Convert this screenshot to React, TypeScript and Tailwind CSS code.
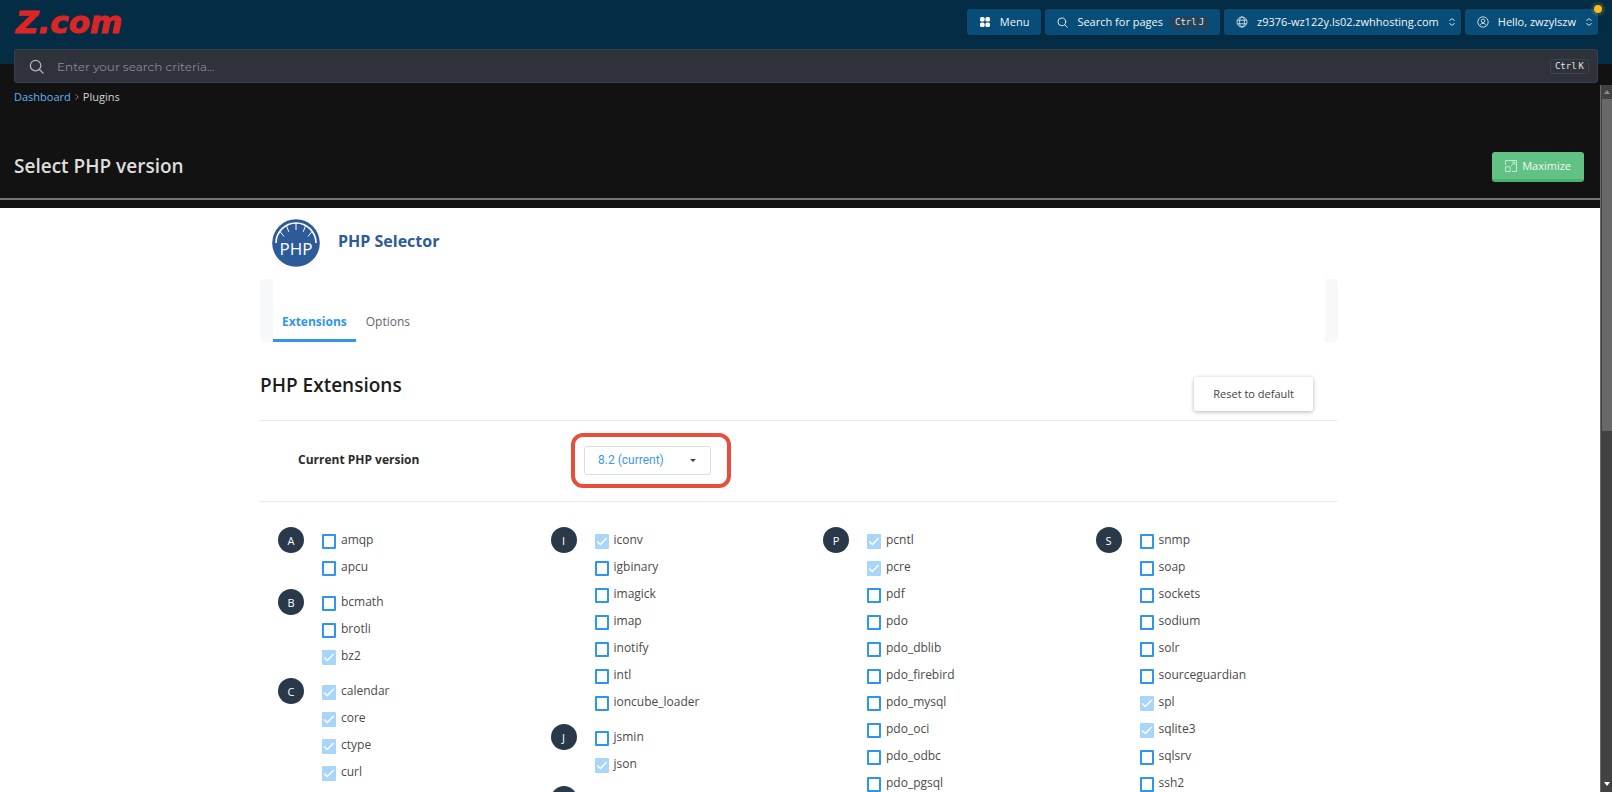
import React, { useState } from 'react';

const columns = [
  [
    { letter: 'A', items: ['amqp', 'apcu'] },
    { letter: 'B', items: ['bcmath', 'brotli', 'bz2'] },
    { letter: 'C', items: ['calendar', 'core', 'ctype', 'curl'] },
  ],
  [
    { letter: 'I', items: ['iconv', 'igbinary', 'imagick', 'imap', 'inotify', 'intl', 'ioncube_loader'] },
    { letter: 'J', items: ['jsmin', 'json'] },
    { letter: '', items: [] },
  ],
  [
    {
      letter: 'P',
      items: ['pcntl', 'pcre', 'pdf', 'pdo', 'pdo_dblib', 'pdo_firebird', 'pdo_mysql', 'pdo_oci', 'pdo_odbc', 'pdo_pgsql'],
    },
  ],
  [
    {
      letter: 'S',
      items: ['snmp', 'soap', 'sockets', 'sodium', 'solr', 'sourceguardian', 'spl', 'sqlite3', 'sqlsrv', 'ssh2'],
    },
  ],
];

// built into PHP, always on
const builtIn = ['bz2', 'calendar', 'core', 'ctype', 'curl', 'iconv', 'json', 'pcntl', 'pcre', 'spl', 'sqlite3'];

const navButton =
  'flex h-[26px] items-center rounded-[3px] bg-[#084d78] text-[11px] text-[#f1f6f9] shadow-sm';

function SearchIcon({ className }) {
  return (
    <svg className={className} viewBox="0 0 16 16" fill="none" stroke="currentColor" strokeWidth="1.3" strokeLinecap="round">
      <circle cx="7" cy="7" r="5.6" />
      <path d="M11.2 11.2 15 15" />
    </svg>
  );
}

function UpDownIcon() {
  return (
    <svg className="h-[8px] w-[6px]" viewBox="0 0 6 8" fill="none" stroke="#c5d6e1" strokeWidth="1">
      <path d="M.8 2.9V2.2L3 .7l2.2 1.5v.7M.8 5.1v.7L3 7.3l2.2-1.5v-.7" />
    </svg>
  );
}

function PhpLogo() {
  return (
    <svg className="h-12 w-12" viewBox="0 0 48 48" role="img" aria-label="PHP">
      <circle cx="24" cy="24" r="23.8" fill="#2d5a99" />
      <g fill="none" stroke="#fff">
        <path d="M4 24a20 20 0 0 1 40 0" strokeWidth="1.6" />
        <path d="M24 4v7M14.5 6.8l2.3 6M33.5 6.8l-2.3 6M8 12.5l4 5M40 12.5l-4 5" strokeWidth="1" />
      </g>
      <text x="24" y="36" textAnchor="middle" fill="#fff" fontFamily="'Open Sans', sans-serif" fontSize="17" fontWeight="500">
        PHP
      </text>
    </svg>
  );
}

function Extension({ name }) {
  const locked = builtIn.includes(name);
  return (
    <label className="flex h-[27px] items-start gap-[5px] text-[12px] leading-[26px] text-[#4a4a4a]">
      <span className="relative mt-[7px] h-[15px] w-[14px] shrink-0">
        <input
          type="checkbox"
          defaultChecked={locked}
          disabled={locked}
          className="block h-[15px] w-[14px] appearance-none rounded-[1px] border-2 border-[#2f96ee] checked:border-[#a8d6fa] checked:bg-[#a8d6fa]"
        />
        {locked && (
          <svg className="pointer-events-none absolute inset-0" viewBox="0 0 14 15" fill="none" stroke="#fff" strokeWidth="1.4">
            <path d="m2.2 7.4 3.1 3.2 6.4-6.6" />
          </svg>
        )}
      </span>
      {name}
    </label>
  );
}

export default function App() {
  const [version, setVersion] = useState('8.2');

  return (
    <div className="flex h-screen flex-col overflow-hidden bg-[#121212] font-['Open_Sans',sans-serif]">
      <header className="flex h-16 shrink-0 items-start justify-between bg-[#042c44] px-[14px]">
        <a
          href="#"
          className="pt-[6px] pl-[2px] font-['DejaVu_Sans',sans-serif] text-[31px] leading-[32px] font-bold text-[#dc2626] italic [-webkit-text-stroke:1px_#dc2626]"
        >
          Z.com
        </a>
        <nav className="flex gap-1 pt-[9px]">
          <button className={`${navButton} gap-[9px] px-3`}>
            <svg className="h-3 w-3" viewBox="0 0 12 12" fill="#fff">
              <rect x="1" y="1" width="4.6" height="4.6" rx="1.6" />
              <rect x="6.4" y="1" width="4.6" height="4.6" rx="1.6" />
              <rect x="1" y="6.4" width="4.6" height="4.6" rx="1.6" />
              <rect x="6.4" y="6.4" width="4.6" height="4.6" rx="1.6" />
            </svg>
            Menu
          </button>
          <button className={`${navButton} px-3`}>
            <SearchIcon className="mr-[9px] h-[11px] w-[11px]" />
            Search for pages
            <span className="ml-2 flex items-center gap-[2px] rounded-[3px] bg-[#24435a] px-1 font-['DejaVu_Sans_Mono',monospace] text-[9px] leading-[13px] text-[#dfe6ea]">
              <kbd className="font-[inherit]">Ctrl</kbd>
              <kbd className="font-[inherit]">J</kbd>
            </span>
          </button>
          <button className={`${navButton} pr-[6px] pl-3`}>
            <svg className="mr-[9px] h-3 w-3" viewBox="0 0 12 12" fill="none" stroke="#d5e2ea" strokeWidth=".9">
              <circle cx="6" cy="6" r="5" />
              <ellipse cx="6" cy="6" rx="2.4" ry="5" />
              <path d="M1.4 4.2h9.2M1.4 7.8h9.2" />
            </svg>
            z9376-wz122y.ls02.zwhhosting.com
            <span className="ml-[10px]">
              <UpDownIcon />
            </span>
          </button>
          <button className={`${navButton} relative pr-[6px] pl-3`}>
            <svg className="mr-[9px] h-3 w-3" viewBox="0 0 12 12" fill="none" stroke="#d5e2ea" strokeWidth=".9">
              <circle cx="6" cy="6" r="5.2" />
              <circle cx="6" cy="4.8" r="1.8" />
              <path d="M2.8 9.6c.6-1.7 1.8-2.2 3.2-2.2s2.6.5 3.2 2.2" />
            </svg>
            Hello, zwzylszw
            <span className="ml-[10px]">
              <UpDownIcon />
            </span>
            <span className="absolute -top-1 -right-1 h-2 w-2 rounded-full bg-[#fbbc1c] ring-3 ring-[#fbbc1c]/15" />
          </button>
        </nav>
      </header>

      <form className="relative mx-[14px] -mt-[15px] flex h-[34px] shrink-0 items-center rounded-[3px] border border-[#35424e] bg-[#2f323b] pr-2 pl-[14px]">
        <SearchIcon className="h-[15px] w-[15px] text-[#b4b8c0]" />
        <input
          type="text"
          aria-label="Search"
          placeholder="Enter your search criteria..."
          className="ml-[13px] flex-1 bg-transparent pt-px font-[Montserrat,Inter,sans-serif] text-[12px] text-white outline-none placeholder:text-[#858994]"
        />
        <span className="flex items-center gap-[2px] rounded-[3px] border border-[#3f434e] px-1 font-['DejaVu_Sans_Mono',monospace] text-[9px] leading-[13px] text-[#e0e2e6]">
          <kbd className="font-[inherit]">Ctrl</kbd>
          <kbd className="font-[inherit]">K</kbd>
        </span>
      </form>

      <div className="mt-[2px] flex min-h-0 flex-1">
        <main className="min-w-0 flex-1 overflow-hidden">
          <nav aria-label="Breadcrumb" className="flex items-center gap-1 px-[14px] pt-1 text-[11px] leading-4">
            <a href="#" className="text-[#63b3ed]">
              Dashboard
            </a>
            <svg className="h-[6px] w-1" viewBox="0 0 4 6" fill="none" stroke="#888">
              <path d="m.6.4 2.6 2.6L.6 5.6" />
            </svg>
            <span className="text-[#d4d4d4]">Plugins</span>
          </nav>

          <div className="mt-[47px] flex items-center justify-between border-b-2 border-[#757575] pr-4 pb-4 pl-[14px]">
            <h1 className="pb-[2px] text-[19px] leading-7 font-semibold text-[#dedede]">Select PHP version</h1>
            <button className="flex h-[30px] items-center gap-[5px] rounded-[3px] border-b-3 border-[#4caf6e] bg-[#62c185] px-[13px] pt-px text-[11px] font-medium text-[#effaf3]">
              <svg className="h-3 w-3" viewBox="0 0 12 12" fill="none" stroke="#cdeed8" strokeWidth=".9">
                <path d="M.5 5V.5h11v11H7M.5 6.8h4.7v4.7H.5zM6 6l3.6-3.6M6.8 2.2h3v3" />
              </svg>
              Maximize
            </button>
          </div>

          <section className="mt-2 min-h-screen bg-white">
            <div className="mx-auto max-w-[1080px] pr-[2px]">
              <div className="flex items-center gap-[18px] px-3 pt-[11px]">
                <PhpLogo />
                <h2 className="pb-1 text-[16px] leading-6 font-bold text-[#2d5a99]">PHP Selector</h2>
              </div>

              <div className="mt-3 flex h-[63px] items-end rounded-[5px] border-x-13 border-[#f7f8fa] text-[12px]">
                <a href="#" className="border-b-3 border-[#2f96ee] px-[9px] pb-2 leading-[18px] font-bold text-[#2f96ee]">
                  Extensions
                </a>
                <a href="#" className="px-[10px] pb-[11px] leading-[18px] text-[#666]">
                  Options
                </a>
              </div>

              <div className="mt-[33px] flex items-start justify-between border-b border-[#ececec] pr-[25px] pb-[9px]">
                <h3 className="text-[19px] leading-5 font-semibold text-[#1c1c1c]">PHP Extensions</h3>
                <button className="mt-[2px] h-[34px] rounded-[3px] bg-white px-[19px] text-[11px] text-[#444] shadow-[0_1px_4px_rgba(0,0,0,0.3)]">
                  Reset to default
                </button>
              </div>

              <div className="flex h-[81px] items-center border-b border-[#ececec] pb-[2px] pl-[38px]">
                <label htmlFor="php-version" className="w-[273px] text-[12px] leading-5 font-bold text-[#2b2b2b]">
                  Current PHP version
                </label>
                <div className="rounded-[12px] border-4 border-[#e54f3c] py-[9px] pr-4 pl-[9px]">
                  <div className="relative">
                    <select
                      id="php-version"
                      value={version}
                      onChange={(e) => setVersion(e.target.value)}
                      className="block h-[29px] w-[127px] appearance-none rounded-[3px] border border-[#d9dcea] bg-white pl-[13px] font-[Roboto,sans-serif] text-[12px] text-[#3a99ea]"
                    >
                      <option value="8.2">8.2 (current)</option>
                      <option value="8.1">8.1</option>
                      <option value="8.0">8.0</option>
                      <option value="7.4">7.4</option>
                    </select>
                    <svg className="pointer-events-none absolute top-[13px] right-[15px] h-[3px] w-[6px]" viewBox="0 0 6 3" fill="#444">
                      <path d="M0 0h6L3 3z" />
                    </svg>
                  </div>
                </div>
              </div>

              <div className="grid grid-cols-4 gap-[30px] pt-[25px] pl-[18px]">
                {columns.map((groups, i) => (
                  <div key={i} className="flex flex-col gap-2">
                    {groups.map(({ letter, items }) => (
                      <div key={letter} className="flex items-start gap-[18px]">
                        <span className="flex h-[26px] w-[26px] items-center justify-center rounded-full bg-[#293949] text-[11px] leading-none text-white">
                          {letter}
                        </span>
                        <div>
                          {items.map((name) => (
                            <Extension key={name} name={name} />
                          ))}
                        </div>
                      </div>
                    ))}
                  </div>
                ))}
              </div>
            </div>
          </section>
        </main>

        {/* scroll track */}
        <div className="flex w-3 shrink-0 flex-col items-center border-l border-[#6a6a6a] bg-[#424242]">
          <svg className="my-[5px] h-[4px] w-[6px] shrink-0" viewBox="0 0 6 4" fill="#8a8a8a">
            <path d="M0 4h6L3 0z" />
          </svg>
          <div className="ml-px h-[47%] w-[10px] bg-[#686868]" />
          <svg className="mt-auto mb-[6px] h-[4px] w-[6px] shrink-0" viewBox="0 0 6 4" fill="#fff">
            <path d="M0 0h6L3 4z" />
          </svg>
        </div>
      </div>
    </div>
  );
}
